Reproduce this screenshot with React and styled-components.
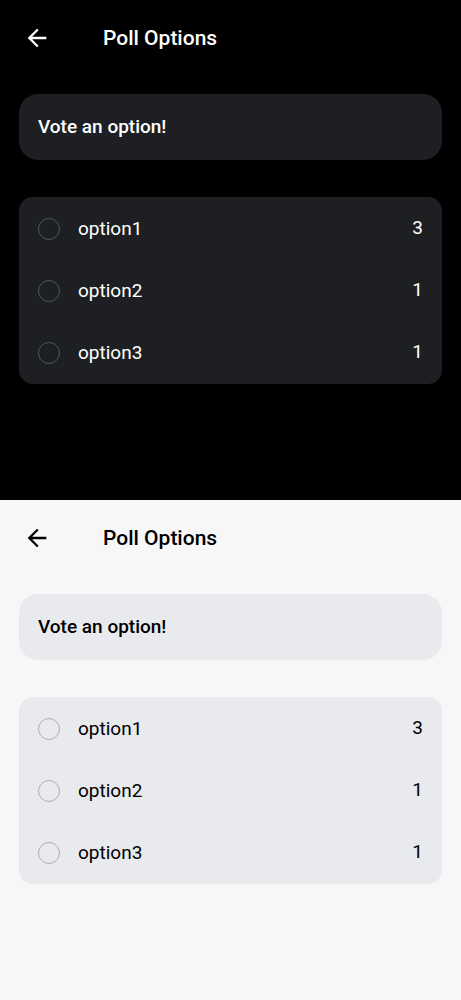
import React from "react";
import styled, { createGlobalStyle, ThemeProvider } from "styled-components";

const GlobalStyle = createGlobalStyle`
  *, *::before, *::after { box-sizing: border-box; }
  html, body { margin: 0; padding: 0; }
  body { font-family: Roboto, "Liberation Sans", sans-serif; }
`;

const dark = { name: "dark", page: "#000000", card: "#1e1f23", text: "#ffffff", ring: "#50545d" };
const light = { name: "light", page: "#f7f7f7", card: "#e9eaed", text: "#000000", ring: "#afb0b4" };

const options = [
  { label: "option1", votes: 3 },
  { label: "option2", votes: 1 },
  { label: "option3", votes: 1 },
];

const Page = styled.main`
  display: flex;
  flex-direction: column;
  min-height: 100vh;
`;

const Screen = styled.section`
  flex: 1;
  background: ${({ theme }) => theme.page};
  color: ${({ theme }) => theme.text};
`;

const Header = styled.header`
  display: flex;
  align-items: center;
  gap: 52px;
  height: 75px;
  padding: 0 23px;
`;

const BackButton = styled.button`
  display: flex;
  padding: 0;
  border: 0;
  background: none;
  color: inherit;
  cursor: pointer;
`;

const Title = styled.h1`
  margin: 0;
  font-size: 21px;
  font-weight: 500;
  line-height: 26px;
`;

const Content = styled.div`
  display: flex;
  flex-direction: column;
  gap: 37px;
  padding: 19px;
`;

const QuestionCard = styled.div`
  padding: 20px 19px;
  border-radius: 19px;
  background: ${({ theme }) => theme.card};
`;

const Question = styled.h2`
  margin: 0;
  font-size: 19px;
  font-weight: 500;
  line-height: 26px;
`;

const OptionList = styled.div`
  padding-top: 1px;
  border-radius: 14px;
  background: ${({ theme }) => theme.card};
`;

const OptionRow = styled.label`
  display: flex;
  align-items: center;
  gap: 18px;
  height: 62px;
  padding: 0 19px;
  font-size: 19px;
  line-height: 26px;
  cursor: pointer;
`;

const Radio = styled.input`
  appearance: none;
  flex: none;
  width: 22px;
  height: 22px;
  margin: 0;
  border: 1px solid ${({ theme }) => theme.ring};
  border-radius: 50%;

  &:checked {
    border: 6px solid ${({ theme }) => theme.text};
  }
`;

const OptionName = styled.span`
  flex: 1;
`;

const Votes = styled.span`
  padding-bottom: 2px;
`;

function BackIcon() {
  return (
    <svg width="28" height="28" viewBox="0 0 24 24" fill="currentColor" aria-hidden="true">
      <path d="M20 11H7.83l5.59-5.59L12 4l-8 8 8 8 1.41-1.41L7.83 13H20v-2z" />
    </svg>
  );
}

function PollScreen({ theme }) {
  return (
    <ThemeProvider theme={theme}>
      <Screen>
        <Header>
          <BackButton type="button" aria-label="Back">
            <BackIcon />
          </BackButton>
          <Title>Poll Options</Title>
        </Header>
        <Content>
          <QuestionCard>
            <Question>Vote an option!</Question>
          </QuestionCard>
          <OptionList role="radiogroup" aria-label="Vote an option!">
            {options.map(({ label, votes }) => (
              <OptionRow key={label}>
                <Radio type="radio" name={`poll-${theme.name}`} value={label} />
                <OptionName>{label}</OptionName>
                <Votes>{votes}</Votes>
              </OptionRow>
            ))}
          </OptionList>
        </Content>
      </Screen>
    </ThemeProvider>
  );
}

export default function App() {
  return (
    <>
      <GlobalStyle />
      <Page>
        <PollScreen theme={dark} />
        <PollScreen theme={light} />
      </Page>
    </>
  );
}
